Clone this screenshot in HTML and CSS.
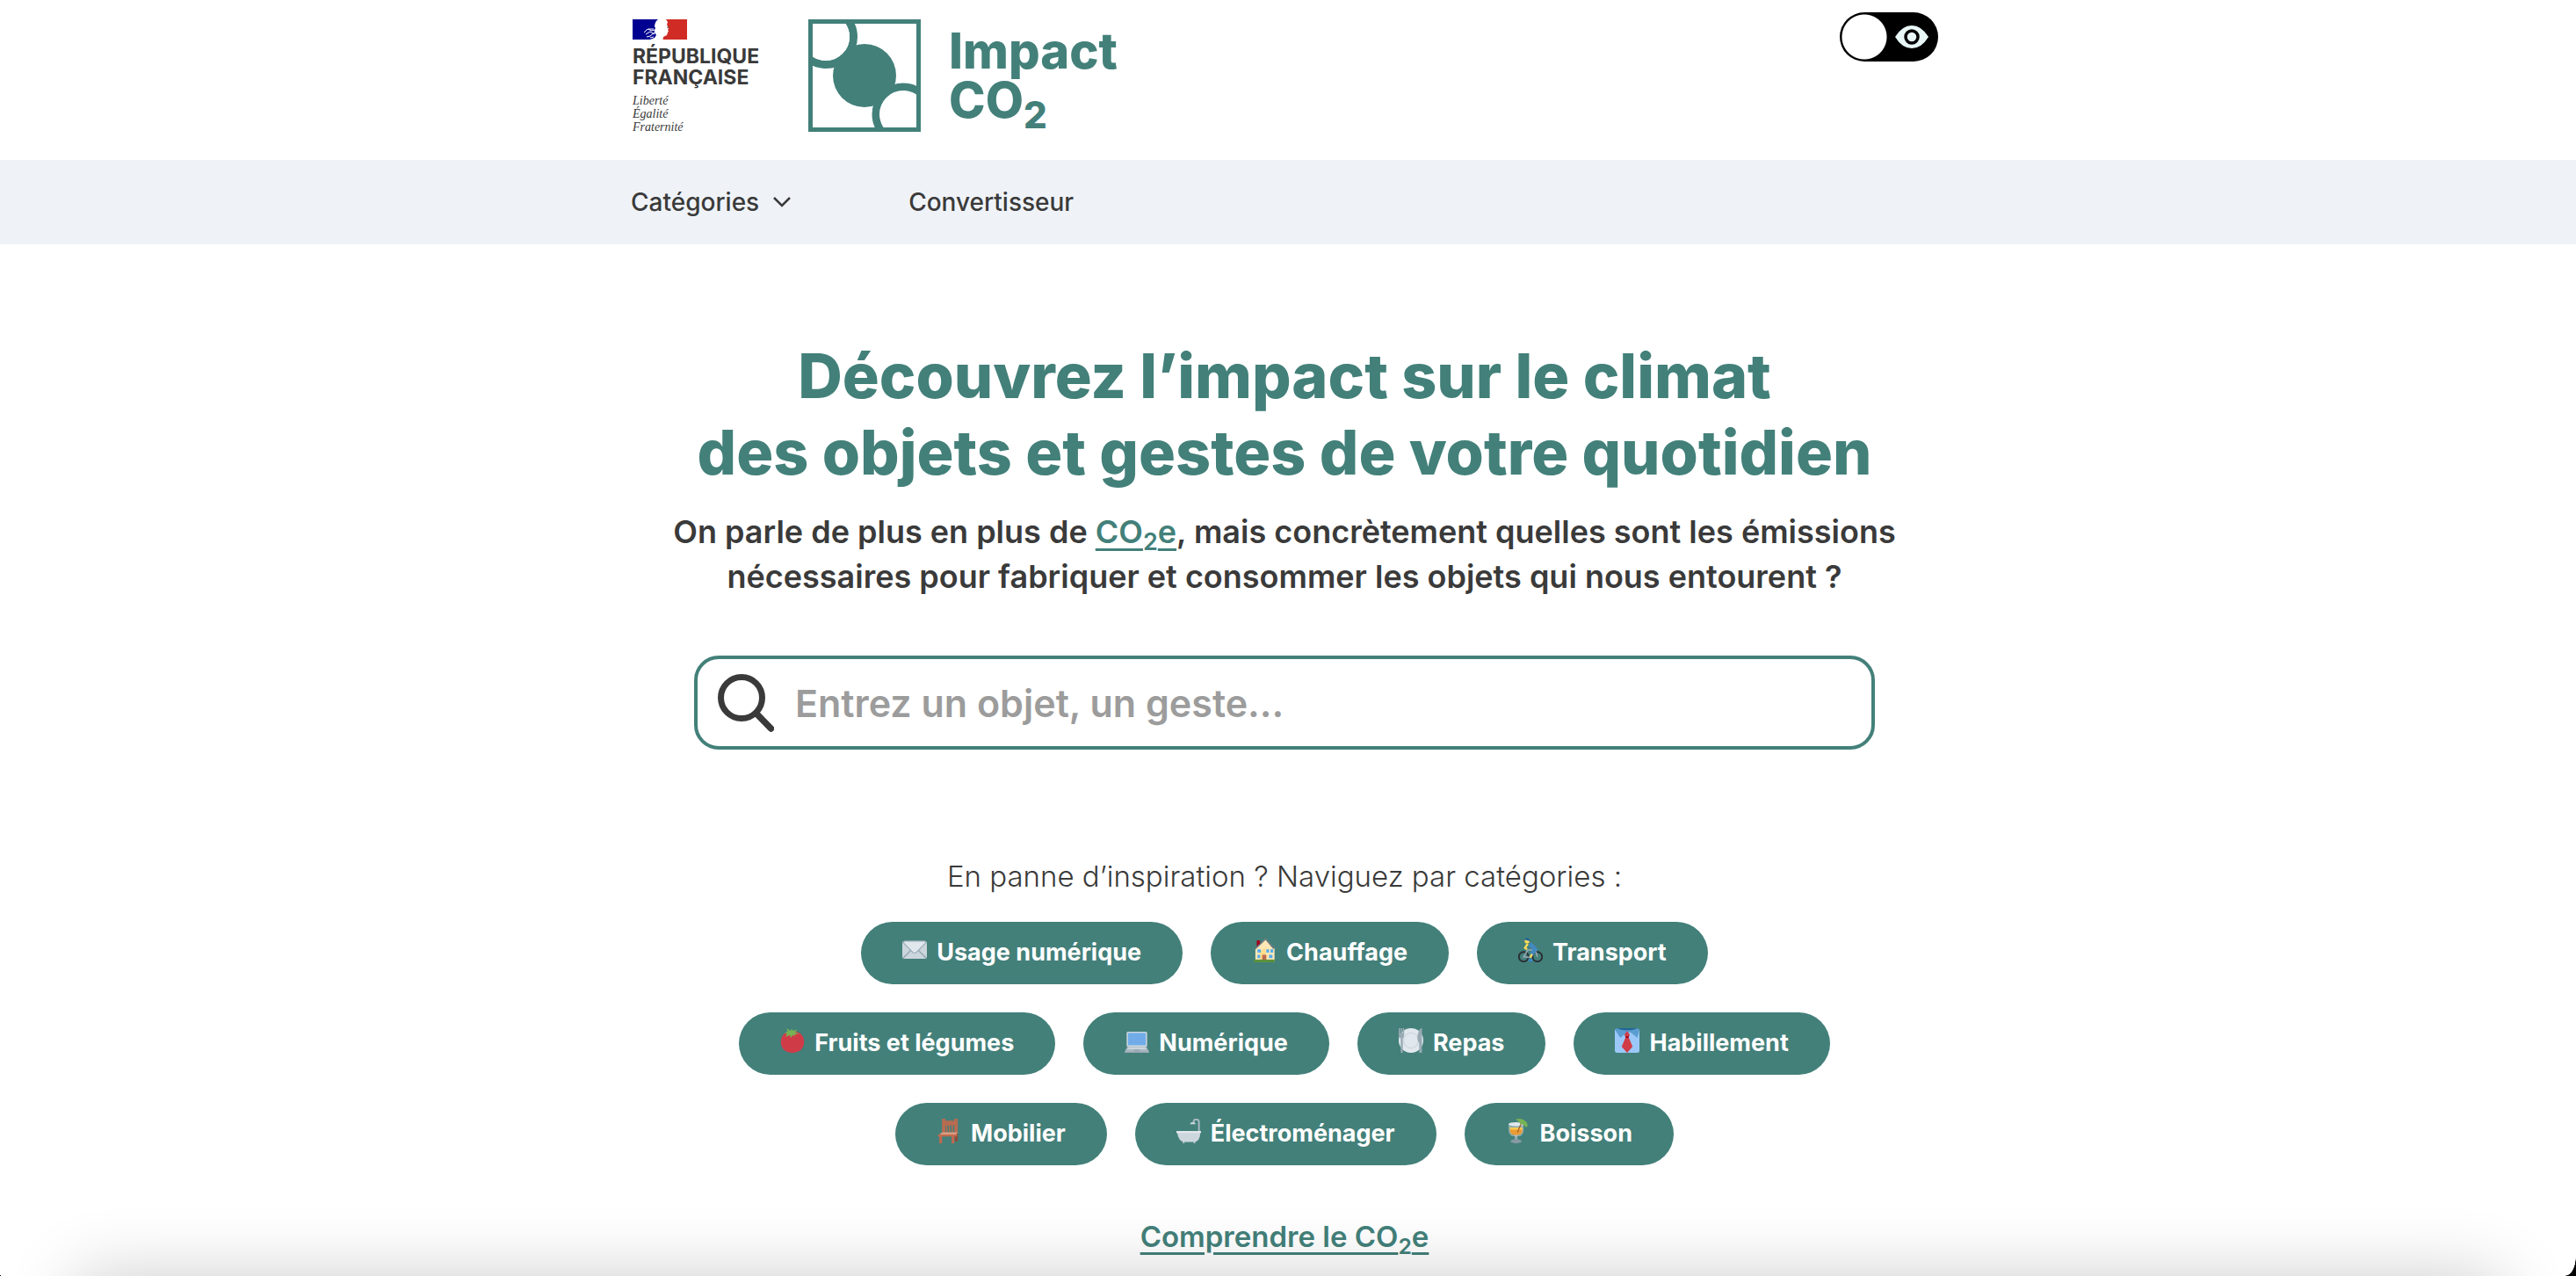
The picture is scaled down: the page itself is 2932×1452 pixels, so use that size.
FILE: index.html
```html
<!DOCTYPE html>
<html lang="fr">
<head>
<meta charset="utf-8">
<meta name="viewport" content="width=device-width, initial-scale=1">
<title>Impact CO2</title>
<link rel="stylesheet" href="styles.css">
</head>
<body>
<header class="header">
  <div class="wrap header-inner">
    <a class="brand" href="#">
      <span class="republic">
        <svg class="flag" viewBox="0 0 62 23" aria-hidden="true">
          <path fill="#000091" d="M0 0h29q-3 2-3.500 5l-.5 3 1 2-1 2v3l2 3-2 3-5 2H0z"/>
          <path fill="#d02c25" d="M38 0h24v23H34.500l.5-3 4-2 1-3 1-2-1-1 1-2-2-4 1-3z"/>
          <path fill="none" stroke="#fff" stroke-width="1" d="M13 15l4-4 5 2 3-1M15 17l5-3 5 3M16 20l4-1 5-4M20 21l4-1M18 11l6 0"/>
          <path fill="#3a3a3a" d="M39 9l2-1v1l-1 1z"/>
        </svg>
        <span class="republic-name">RÉPUBLIQUE<br>FRANÇAISE</span>
        <span class="motto">Liberté<br>Égalité<br>Fraternité</span>
      </span>
      <svg class="logo" viewBox="0 0 128 128" aria-hidden="true">
        <defs><clipPath id="frame"><path d="M5 5h118v118H5z"/></clipPath></defs>
        <path fill="#43807a" d="M0 0h128v128H0z"/>
        <path fill="#fff" d="M5 5h118v118H5z"/>
        <g clip-path="url(#frame)">
          <circle cx="20" cy="20" r="31.500" fill="#fff" stroke="#43807a" stroke-width="9"/>
          <circle cx="108" cy="108" r="31" fill="#fff" stroke="#43807a" stroke-width="9"/>
          <circle cx="64" cy="64" r="36" fill="#43807a"/>
          <circle cx="20" cy="20" r="27" fill="#fff"/>
          <circle cx="108" cy="108" r="27" fill="#fff"/>
        </g>
      </svg>
      <span class="site-name">Impact<br>CO<sub>2</sub></span>
    </a>
    <label class="toggle">
      <input type="checkbox" aria-label="Affichage accessible">
      <svg viewBox="0 0 38 26" aria-hidden="true">
        <path fill="#e8f7f6" d="M0 13Q8 0 19 0t19 13q-8 13-19 13T0 13z"/>
        <circle cx="19" cy="13" r="7" fill="#e8f7f6" stroke="#000" stroke-width="3.500"/>
      </svg>
    </label>
  </div>
</header>
<nav class="nav">
  <div class="wrap nav-inner">
    <button type="button" class="nav-item">Catégories
      <svg viewBox="0 0 20 12" aria-hidden="true"><path d="M1 1l9 9 9-9" fill="none" stroke="currentColor" stroke-width="2.500"/></svg>
    </button>
    <a class="nav-item" href="#">Convertisseur</a>
  </div>
</nav>
<main class="main">
  <h1>Découvrez l’impact sur le climat<br>des objets et gestes de votre quotidien</h1>
  <p class="intro">On parle de plus en plus de <a href="#">CO<sub>2</sub>e</a>, mais concrètement quelles sont les émissions<br>nécessaires pour fabriquer et consommer les objets qui nous entourent ?</p>
  <label class="search">
    <svg viewBox="0 0 64 66" aria-hidden="true"><g fill="none" stroke="#3a3a3a"><circle cx="27" cy="27" r="23.500" stroke-width="7"/><path d="M44 45l16.500 17" stroke-width="7.500" stroke-linecap="round"/></g></svg>
    <input type="text" placeholder="Entrez un objet, un geste..." aria-label="Rechercher un objet ou un geste">
  </label>
  <p class="hint">En panne d’inspiration ? Naviguez par catégories :</p>
  <ul class="tags">
    <li><a class="tag" href="#"><svg viewBox="0 0 36 36"><rect y="5" width="36" height="26" rx="3" fill="#ccd6dd"/><path fill="none" stroke="#99aab5" stroke-width="2" d="M1 30l12-12M35 30L23 18"/><path fill="#e1e8ed" stroke="#99aab5" stroke-width="1.500" d="M1 7l14 14q3 3 6 0L35 7q-1-2-3-2H4Q2 5 1 7z"/></svg>Usage numérique</a></li>
    <li><a class="tag" href="#"><svg viewBox="0 0 36 36"><path fill="#a0041e" d="M7 4h5v12H7z"/><path fill="#ffe8b6" d="M20 1L5 16v18h28V16z"/><path fill="#ffcc4d" d="M20 14l-8 6v14h8z" opacity=".4"/><path fill="none" stroke="#66757f" stroke-width="2" d="M4 17L20 2l12 14"/><path fill="#55acee" d="M8 17h5v5H8zM21 17h4v5h-4zM27 17h4v5h-4zM8 25h4v5H8zM25 25h5v5h-5z"/><path fill="#c1694f" d="M15 25h6v9h-6z"/><path fill="#5c913b" d="M3 32h30v4H3z"/></svg>Chauffage</a></li>
    <li><a class="tag" href="#"><svg viewBox="0 0 36 36"><g fill="none" stroke="#292f33" stroke-width="2.500"><circle cx="8" cy="28" r="7"/><circle cx="28" cy="28" r="7"/></g><path fill="none" stroke="#99aab5" stroke-width="2" d="M8 28l6-10h12l-8 11zM28 28l-4-13"/><path fill="none" stroke="#4289c1" stroke-width="6" stroke-linejoin="round" d="M17 9l8 8-5 7"/><path fill="none" stroke="#ffdc5d" stroke-width="3" d="M14 9l-4 6 3 2M20 24l-2 5"/><circle cx="13" cy="5" r="3.500" fill="#ffdc5d"/><path fill="#226699" d="M9 3q2-4 6-2 3 2 2 4z"/><path fill="#3b88c3" d="M15 31h6v4h-6z"/></svg>Transport</a></li>
    <li><a class="tag" href="#"><svg viewBox="0 0 36 36"><path fill="#d03b48" d="M18 5C7 4 1 11 1 20c0 10 7 16 17 16s17-6 17-16C35 11 29 4 18 5z"/><path fill="#77b255" d="M9 0l6 4 2-3 2 3 6-2-3 4 6 2-7 1 1 3-4-2-2 4-2-4-6 3 2-5-4-1 5-2z"/></svg>Fruits et légumes</a></li>
    <li><a class="tag" href="#"><svg viewBox="0 0 36 36"><rect x="3" y="5" width="30" height="22" rx="2" fill="#ccd6dd"/><path fill="#71ace8" d="M5 7h26v18H5z"/><path fill="#aab8c2" d="M4 27h28l4 8H0z"/><path fill="#ccd6dd" d="M6 28h24l2 3H4z"/><path fill="#99aab5" d="M14 31h8v3h-8zM0 34h36v2H0z"/></svg>Numérique</a></li>
    <li><a class="tag" href="#"><svg viewBox="0 0 36 36"><circle cx="18" cy="18" r="18" fill="#e1e8ed"/><circle cx="18" cy="18" r="11" fill="none" stroke="#ccd6dd" stroke-width="1.500"/><path fill="#99aab5" d="M0 0h2v7h1V0h2v7h1V0h2v9q0 4-2 6v21H3V15q-3-2-3-6zM30 36V22q-4-4-2-13 2-9 6-9v36z"/></svg>Repas</a></li>
    <li><a class="tag" href="#"><svg viewBox="0 0 36 36"><path fill="#9bc8f8" d="M0 2h36v31q0 3-3 3H3q-3 0-3-3z"/><path fill="#5c9dd1" d="M0 2l4-2h28l4 2-3 12-10-8h-5L8 14z"/><path fill="#226699" d="M4 0h28q-3 3-14 3T4 0z"/><path fill="#d03b48" d="M18 4l4 6-2 3 6 14-8 9-8-9 6-14-2-3z"/><path fill="#a0041e" d="M15 12h6l-1 2h-4z"/></svg>Habillement</a></li>
    <li><a class="tag" href="#"><svg viewBox="0 0 36 36"><path fill="#b86b50" d="M8 0h5v3h13V0h5v22H8z"/><path fill="#43807a" d="M13 10h13v11H13z"/><path fill="#b86b50" d="M14 10h2v12h-2zM18 10h2v12h-2zM22 10h2v12h-2z"/><path fill="#8a4b38" d="M26 22h5v11h-4z"/><path fill="#d99e82" d="M8 20h23l-3 4H3z"/><path fill="#c1694f" d="M2 23h28v3H2zM4 26h4v10H4zM22 26h4v10h-4z"/></svg>Mobilier</a></li>
    <li><a class="tag" href="#"><svg viewBox="0 0 36 36"><path fill="none" stroke="#aab8c2" stroke-width="2.500" d="M33 20V5q0-4-4-4t-4 5"/><path fill="#ccd6dd" d="M20 8q0-3 4-3t4 3z"/><path fill="#aab8c2" d="M9 33h3v3H9zM25 33h3v3h-3z"/><path fill="#ccd6dd" d="M1 20h34q0 14-10 14H12Q3 34 1 20z"/><path fill="#e1e8ed" d="M0 18h36v3H0z"/></svg>Électroménager</a></li>
    <li><a class="tag" href="#"><svg viewBox="0 0 36 36"><path fill="#99aab5" d="M13 22h4v9h-4z"/><ellipse cx="15" cy="33" rx="8" ry="3" fill="#8899a6"/><path fill="#ccd6dd" fill-opacity=".55" d="M4 8h22v9q0 9-11 9T4 17z"/><path fill="#e99b36" d="M6 13h18v5q0 6-9 6t-9-6z"/><ellipse cx="15" cy="8" rx="11" ry="3" fill="#e1e8ed"/><path fill="#ffcc4d" d="M6 13h18v3H6z"/><path fill="none" stroke="#a0562d" stroke-width="1.500" d="M17 20L24 3"/><path fill="#77b255" d="M14 1q9-3 15 3 5 5 1 9-4-5-8-5-3-4-8-7z"/></svg>Boisson</a></li>
  </ul>
  <a class="learn" href="#">Comprendre le CO<sub>2</sub>e</a>
</main>
<div class="bottom-shade" aria-hidden="true"></div>
<div class="corner corner-left" aria-hidden="true"></div>
<div class="corner corner-right" aria-hidden="true"></div>
</body>
</html>
```
FILE: styles.css
```css
:root {
  --green: #43807a;
  --ink: #3a3a3a;
}

* { box-sizing: border-box; }

body {
  margin: 0;
  background: #fff;
  color: var(--ink);
  font-family: Inter, "Open Sans", sans-serif;
  font-weight: 600;
}

a { color: inherit; text-decoration: none; }

sub {
  font-size: 75%;
  line-height: 0;
  vertical-align: sub;
}

.header, .nav, .main { padding-right: 8px; }

.wrap {
  max-width: 1488px;
  margin: 0 auto;
}

/* Header */
.header-inner {
  display: flex;
  justify-content: space-between;
  align-items: flex-start;
  padding: 14px 0 30px;
}

.brand {
  display: flex;
  align-items: flex-start;
  padding: 8px 0 0 2px;
}

.republic {
  display: flex;
  flex-direction: column;
  gap: 7px;
  width: 200px;
}

.flag { width: 62px; height: 23px; }

.republic-name {
  font-size: 23px;
  font-weight: 700;
  line-height: 24px;
}

.motto {
  font: italic 14px/15px "Liberation Serif", serif;
}

.logo { width: 128px; height: 128px; }

.site-name {
  margin-left: 32px;
  color: var(--green);
  font-size: 56px;
  font-weight: 800;
  line-height: 56px;
  padding-top: 8px;
}

.toggle {
  position: relative;
  display: block;
}

.toggle input {
  appearance: none;
  display: block;
  width: 112px;
  height: 56px;
  margin: 0;
  border-radius: 28px;
  background: radial-gradient(circle at 28px 28px, #fff 25px, #000 26px);
}

.toggle svg {
  position: absolute;
  top: 15px;
  right: 11px;
  width: 38px;
  height: 26px;
}

/* Navigation */
.nav { background: #eff3f8; }

.nav-inner {
  display: flex;
  gap: 134px;
  padding: 28px 0;
}

.nav-item {
  display: flex;
  align-items: center;
  gap: 16px;
  padding: 0;
  border: 0;
  background: none;
  color: inherit;
  font: inherit;
  font-size: 28px;
  font-weight: 500;
  line-height: 40px;
}

.nav-item svg { width: 20px; height: 12px; }

/* Content */
.main {
  display: flex;
  flex-direction: column;
  align-items: center;
  padding-top: 106px;
  text-align: center;
}

h1 {
  margin: 0 0 22px;
  color: var(--green);
  font-size: 70px;
  font-weight: 800;
  line-height: 87px;
}

.intro {
  margin: 0 0 64px;
  font-size: 36px;
  line-height: 51px;
}

.intro a, .learn {
  color: var(--green);
  text-decoration: underline;
  text-decoration-thickness: 3px;
  text-underline-offset: 6px;
}

.search {
  display: flex;
  align-items: center;
  gap: 24px;
  width: 100%;
  max-width: 1344px;
  height: 107px;
  padding: 0 23px;
  border: 4px solid var(--green);
  border-radius: 28px;
}

.search svg { flex: none; width: 64px; height: 66px; }

.search input {
  flex: 1;
  min-width: 0;
  padding: 0;
  border: 0;
  outline: 0;
  background: none;
  color: var(--ink);
  font: inherit;
  font-size: 43px;
  line-height: 60px;
}

.search input::placeholder { color: #9c9c9c; opacity: 1; }

.hint {
  margin: 120px 0 28px;
  font-size: 33px;
  font-weight: 300;
  line-height: 48px;
}

.tags {
  display: flex;
  flex-wrap: wrap;
  justify-content: center;
  gap: 32px;
  max-width: 1300px;
  margin: 0 0 57px;
  padding: 0;
  list-style: none;
}

.tag {
  display: block;
  padding: 16px 47px 18px;
  border-radius: 36px;
  background: var(--green);
  color: #fff;
  font-size: 27px;
  font-weight: 700;
  line-height: 37px;
}

.tag svg {
  width: 28px;
  height: 28px;
  margin-right: 11px;
  vertical-align: -2px;
}

.learn {
  font-size: 33px;
  line-height: 48px;
}

/* Window edge */
.bottom-shade {
  position: fixed;
  right: 85px;
  bottom: -200px;
  left: 85px;
  height: 200px;
  box-shadow: 0 0 80px rgba(0, 0, 0, .2);
  pointer-events: none;
}

.corner {
  position: fixed;
  bottom: 0;
  pointer-events: none;
}

.corner-left {
  left: 0;
  width: 4px;
  height: 2px;
  background: radial-gradient(ellipse at 100% 0, transparent 70%, #000 75%);
}

.corner-right {
  right: 0;
  width: 12px;
  height: 22px;
  background: radial-gradient(ellipse 12px 22px at 0 0, transparent 96%, #000 100%);
}
```
